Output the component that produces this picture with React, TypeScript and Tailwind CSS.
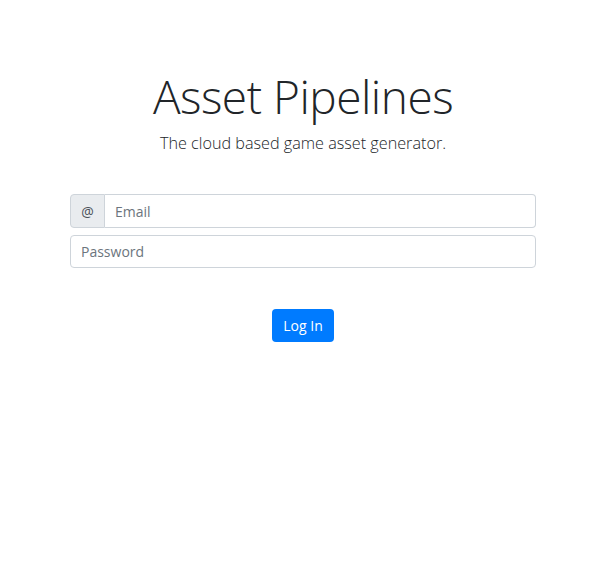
import React from "react";

export default function App() {
  return (
    <main
      className="min-h-screen bg-white text-[#212529] pr-[9px]"
      style={{ fontFamily: '"Open Sans", "Noto Sans", sans-serif' }}
    >
      <div className="w-[466px] mx-auto pt-[69px]">
        <div className="flex flex-col items-center">
          <h1 className="text-[46px] leading-[1.2] font-light tracking-[-0.5px]">Asset Pipelines</h1>
          <p className="text-[16.2px] font-light mt-[7px]">The cloud based game asset generator.</p>
        </div>

        <form className="mt-[39px] flex flex-col gap-[7px]">
          <div className="flex h-[34px]">
            <span className="w-[35px] flex items-center justify-center bg-[#e9ecef] border border-[#ced4da] rounded-l-[4px] text-[14px] text-[#495057]">
              @
            </span>
            <input
              type="text"
              placeholder="Email"
              className="flex-1 border border-l-0 border-[#ced4da] rounded-r-[4px] px-[10px] text-[14px] placeholder:text-[#6c757d] outline-none"
            />
          </div>
          <input
            type="password"
            placeholder="Password"
            className="h-[33px] border border-[#ced4da] rounded-[4px] px-[10px] text-[14px] placeholder:text-[#6c757d] outline-none"
          />
          <div className="flex justify-center mt-[34px]">
            <button
              type="button"
              className="h-[33px] px-[11px] bg-[#007bff] text-white text-[14px] rounded-[4px]"
            >
              Log In
            </button>
          </div>
        </form>
      </div>
    </main>
  );
}
